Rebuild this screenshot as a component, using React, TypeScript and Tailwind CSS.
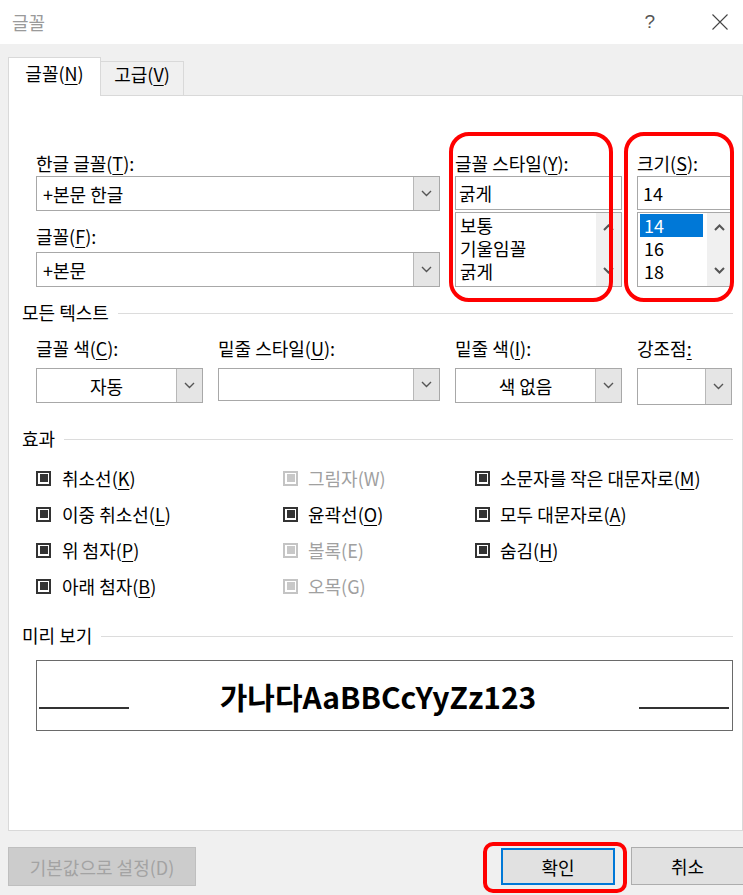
import React from "react";

function U({ c }: { c: string }) {
  return <span className="underline underline-offset-[3px] decoration-1">{c}</span>;
}

function Chev({ up = false, w = 1.4 }: { up?: boolean; w?: number }) {
  return (
    <svg width="11" height="7" viewBox="0 0 11 7">
      <path
        d={up ? "M1 6L5.5 1.5L10 6" : "M1 1L5.5 5.5L10 1"}
        stroke="#555555"
        strokeWidth={w}
        fill="none"
      />
    </svg>
  );
}

function DropBtn() {
  return (
    <div className="w-[26px] self-stretch bg-[#e5e5e5] border-l border-[#b8b8b8] flex items-center justify-center">
      <Chev />
    </div>
  );
}

function Header({ t }: { t: string }) {
  return (
    <div className="flex items-center pl-[13px] pr-[9px] h-[24px] leading-[24px] text-[18px]">
      <span>{t}</span>
      <div className="flex-1 h-px bg-[#dcdcdc] ml-[9px] mt-[3px]" />
    </div>
  );
}

function Cb({ children, disabled = false, gap = "ml-[11px]" }: { children: React.ReactNode; disabled?: boolean; gap?: string }) {
  return (
    <div className="flex items-center h-[36px]">
      <div
        className={
          disabled
            ? "w-[15px] h-[15px] border-2 border-[#c4c4c4] p-[1.5px] bg-white shrink-0"
            : "w-[15px] h-[15px] border-2 border-[#333333] p-[1.5px] bg-white shrink-0"
        }
      >
        <div className={disabled ? "w-full h-full bg-[#c8c8c8]" : "w-full h-full bg-[#333333]"} />
      </div>
      <span className={disabled ? gap + " text-[18px] leading-[24px] text-[#a0a0a0] whitespace-nowrap" : gap + " text-[18px] leading-[24px] whitespace-nowrap"}>
        {children}
      </span>
    </div>
  );
}

export default function App() {
  return (
    <div className="relative w-[743px] h-[895px] overflow-hidden bg-[#f0f0f0] text-black font-['Noto_Sans_CJK_KR','Noto_Sans',sans-serif]">
      {/* title bar */}
      <div className="h-[44px] bg-white flex items-center">
        <span className="pl-[12px] text-[18px] leading-[24px] text-[#9a9a9a]">글꼴</span>
        <span className="ml-auto text-[19px] leading-[24px] text-[#555] font-['Liberation_Sans',sans-serif]">?</span>
        <svg className="ml-[57px] mr-[15px]" width="16" height="16" viewBox="0 0 16 16">
          <path d="M0.5 0.5L15.5 15.5M15.5 0.5L0.5 15.5" stroke="#444" strokeWidth="1.1" fill="none" />
        </svg>
      </div>

      {/* tabs */}
      <div className="pt-[13px] pl-[8px] flex items-end h-[51px]">
        <div className="relative z-10 -mb-px h-[39px] w-[93px] bg-white border border-b-0 border-[#d9d9d9] flex justify-center pt-[3px] text-[18px] leading-[24px]">
          <span>
            글꼴(<U c="N" />)
          </span>
        </div>
        <div className="h-[34px] w-[83px] bg-[#f0f0f0] border-t border-r border-[#d9d9d9] flex justify-center text-[18px] leading-[24px]">
          <span>
            고급(<U c="V" />)
          </span>
        </div>
      </div>

      {/* panel */}
      <div className="ml-[8px] w-[735px] h-[736px] border border-[#d9d9d9] bg-white text-[18px] leading-[24px]">
        {/* top fonts */}
        <div className="grid grid-cols-[167px_222px_167px_95px] gap-x-[15px] pl-[27px] pt-[55px]">
          <div className="col-span-2 flex flex-col">
            <div className="h-[24px]">
              한글 글꼴(<U c="T" />):
            </div>
            <div className="mt-[1px] h-[35px] border border-[#a8a8a8] bg-white flex">
              <div className="flex-1 pl-[6px] flex items-center">+본문 한글</div>
              <DropBtn />
            </div>
            <div className="mt-[13px] h-[24px]">
              글꼴(<U c="F" />):
            </div>
            <div className="mt-[4px] h-[35px] border border-[#a8a8a8] bg-white flex">
              <div className="flex-1 pl-[6px] flex items-center">+본문</div>
              <DropBtn />
            </div>
          </div>

          <div className="flex flex-col">
            <div className="h-[24px] whitespace-nowrap">
              글꼴 스타일(<U c="Y" />):
            </div>
            <div className="mt-[1px] h-[34px] border border-[#a8a8a8] bg-white flex items-center pl-[3px]">굵게</div>
            <div className="mt-[2px] h-[75px] border border-[#a8a8a8] bg-white flex">
              <div className="flex-1 pt-[1px] pl-[4px] leading-[23px]">
                <div>보통</div>
                <div>기울임꼴</div>
                <div>굵게</div>
              </div>
              <div className="w-[25px] bg-[#f0f0f0] flex flex-col items-center justify-between pt-[11px] pb-[12px]">
                <Chev up w={2} />
                <Chev w={2} />
              </div>
            </div>
          </div>

          <div className="flex flex-col">
            <div className="h-[24px] whitespace-nowrap">
              크기(<U c="S" />):
            </div>
            <div className="mt-[1px] h-[34px] border border-[#a8a8a8] bg-white flex items-center pl-[5px]">14</div>
            <div className="mt-[2px] h-[75px] border border-[#a8a8a8] bg-white flex">
              <div className="flex-1 pt-[1px] pl-[2px] leading-[23px]">
                <div className="w-[63px] bg-[#0078d7] text-white pl-[4px]">14</div>
                <div className="pl-[4px]">16</div>
                <div className="pl-[4px]">18</div>
              </div>
              <div className="w-[24px] bg-[#f0f0f0] flex flex-col items-center justify-between pt-[11px] pb-[12px]">
                <Chev up w={2} />
                <Chev w={2} />
              </div>
            </div>
          </div>
        </div>

        {/* 모든 텍스트 */}
        <div className="mt-[13px]">
          <Header t="모든 텍스트" />
        </div>
        <div className="grid grid-cols-[167px_222px_167px_95px] gap-x-[15px] pl-[27px] mt-[12px] items-start">
          <div className="flex flex-col">
            <div className="h-[24px] whitespace-nowrap">
              글꼴 색(<U c="C" />):
            </div>
            <div className="mt-[8px] h-[35px] border border-[#a8a8a8] bg-white flex">
              <div className="flex-1 flex items-center justify-center">자동</div>
              <DropBtn />
            </div>
          </div>
          <div className="flex flex-col">
            <div className="h-[24px] whitespace-nowrap">
              밑줄 스타일(<U c="U" />):
            </div>
            <div className="mt-[8px] h-[33px] border border-[#a8a8a8] bg-white flex">
              <div className="flex-1" />
              <DropBtn />
            </div>
          </div>
          <div className="flex flex-col">
            <div className="h-[24px] whitespace-nowrap">
              밑줄 색(<U c="I" />):
            </div>
            <div className="mt-[8px] h-[35px] border border-[#a8a8a8] bg-white flex">
              <div className="flex-1 flex items-center justify-center">색 없음</div>
              <DropBtn />
            </div>
          </div>
          <div className="flex flex-col">
            <div className="h-[24px] whitespace-nowrap">
              강조점<U c=":" />
            </div>
            <div className="mt-[8px] h-[37px] border border-[#a8a8a8] bg-white flex">
              <div className="flex-1" />
              <DropBtn />
            </div>
          </div>
        </div>

        {/* 효과 */}
        <div className="mt-[21px]">
          <Header t="효과" />
        </div>
        <div className="grid grid-cols-[247px_192px_1fr] pl-[27px] mt-[10px]">
          <div className="flex flex-col">
            <Cb gap="ml-[11px]">
              취소선(<U c="K" />)
            </Cb>
            <Cb gap="ml-[11px]">
              이중 취소선(<U c="L" />)
            </Cb>
            <Cb gap="ml-[11px]">
              위 첨자(<U c="P" />)
            </Cb>
            <Cb gap="ml-[11px]">
              아래 첨자(<U c="B" />)
            </Cb>
          </div>
          <div className="flex flex-col">
            <Cb disabled gap="ml-[10px]">그림자(W)</Cb>
            <Cb gap="ml-[10px]">
              윤곽선(<U c="O" />)
            </Cb>
            <Cb disabled gap="ml-[10px]">볼록(E)</Cb>
            <Cb disabled gap="ml-[10px]">오목(G)</Cb>
          </div>
          <div className="flex flex-col">
            <Cb gap="ml-[10px]">
              소문자를 작은 대문자로(<U c="M" />)
            </Cb>
            <Cb gap="ml-[10px]">
              모두 대문자로(<U c="A" />)
            </Cb>
            <Cb gap="ml-[10px]">
              숨김(<U c="H" />)
            </Cb>
          </div>
        </div>

        {/* 미리 보기 */}
        <div className="mt-[19px]">
          <Header t="미리 보기" />
        </div>
        <div className="mt-[13px] ml-[27px] mr-[9px] h-[71px] border border-[#6a6a6a] flex items-center justify-between pl-[2px] pr-[3px]">
          <div className="self-end mb-[21px] h-[2px] w-[90px] bg-[#333]" />
          <span className="text-[30px] leading-none font-bold pr-[12px]">가나다AaBBCcYyZz123</span>
          <div className="self-end mb-[21px] h-[2px] w-[90px] bg-[#333]" />
        </div>
      </div>

      {/* buttons */}
      <div className="mt-[16px] flex w-max">
        <div className="ml-[8px] w-[188px] h-[39px] bg-[#cccccc] border border-[#bfbfbf] flex items-center justify-center text-[18px] leading-[24px] text-[#a3a3a3]">
          기본값으로 설정(D)
        </div>
        <div className="ml-[305px] mt-[1px] w-[114px] h-[37px] bg-[#e1e1e1] border-2 border-[#0078d7] flex items-center justify-center text-[18px] leading-[24px]">
          확인
        </div>
        <div className="ml-[16px] w-[113px] h-[38px] bg-[#e1e1e1] border border-[#adadad] flex items-center justify-center text-[18px] leading-[24px]">
          취소
        </div>
      </div>

      {/* red annotations */}
      <div className="absolute left-[449px] top-[132px] w-[164px] h-[170px] border-4 border-[#ff0000] rounded-[20px]" />
      <div className="absolute left-[624px] top-[132px] w-[110px] h-[170px] border-4 border-[#ff0000] rounded-[20px]" />
      <div className="absolute left-[483px] top-[842px] w-[144px] h-[51px] border-4 border-[#ff0000] rounded-[10px]" />
    </div>
  );
}
